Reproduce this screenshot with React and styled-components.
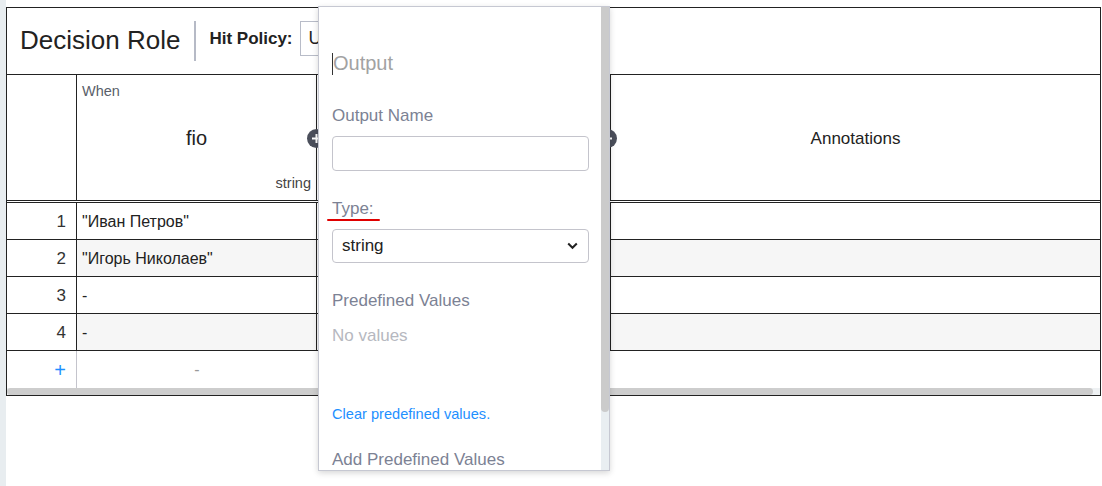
import React from "react";
import styled, { createGlobalStyle } from "styled-components";

const GlobalStyle = createGlobalStyle`
  html, body {
    margin: 0;
    padding: 0;
    background: #fff;
  }
  body {
    font-family: "Liberation Sans", Arial, sans-serif;
    color: #222;
  }
  * {
    box-sizing: border-box;
  }
`;

const COLS = "70px 240px 294px 1fr";

const Page = styled.div`
  display: flex;
  height: 100vh;
  overflow: hidden;
`;

const SideStrip = styled.div`
  width: 6px;
  flex-shrink: 0;
  background: #e8edf0;
`;

const Workspace = styled.div`
  position: relative;
  flex: 1;
  padding-top: 7px;
`;

const Table = styled.div`
  width: 1095px;
  border: 1px solid #222;
`;

const TitleBar = styled.div`
  display: flex;
  align-items: center;
  height: 67px;
  padding: 0 13px;
  border-bottom: 1px solid #222;
`;

const Title = styled.h1`
  margin: 0 0 1px 0;
  font-size: 26px;
  font-weight: normal;
  color: #222;
`;

const Separator = styled.div`
  width: 2px;
  height: 40px;
  margin: 0 13px 0 14px;
  background: #b6bac6;
`;

const HitLabel = styled.span`
  font-size: 17px;
  font-weight: bold;
  margin: 0 7px 5px 0;
`;

const PolicySelect = styled.div`
  display: flex;
  align-items: center;
  width: 210px;
  height: 35px;
  margin-bottom: 5px;
  padding: 0 8px;
  border: 1px solid #b8bcc8;
  font-size: 18px;
  color: #222;
`;

const HeadRow = styled.div`
  display: grid;
  grid-template-columns: ${COLS};
  height: 128px;
  border-bottom: 3px double #222;
`;

const HeadCell = styled.div`
  position: relative;
  display: flex;
  flex-direction: column;
  padding: 8px 5px 8px 5px;
  border-right: ${(p) => (p.last ? "none" : "1px solid #222")};
`;

const ClauseLabel = styled.div`
  font-size: 14.5px;
  line-height: 16px;
  color: #5a5f6a;
`;

const ClauseName = styled.div`
  flex: 1;
  display: flex;
  align-items: center;
  justify-content: center;
  padding-top: 2px;
  font-size: ${(p) => p.size || 20}px;
  color: #222;
`;

const TypeRef = styled.div`
  text-align: right;
  font-size: 14.5px;
  line-height: 17px;
  color: #444;
`;

const AddColumn = styled.div`
  position: absolute;
  top: 50%;
  right: ${(p) => p.offset}px;
  width: 19px;
  height: 19px;
  margin-top: -9px;
  border-radius: 50%;
  background: #4b4f5b;
  z-index: 2;
  display: flex;
  align-items: center;
  justify-content: center;
`;

const BodyRow = styled.div`
  display: grid;
  grid-template-columns: ${COLS};
  height: 37px;
  border-bottom: ${(p) => (p.open ? "none" : "1px solid #222")};
`;

const IndexCell = styled.div`
  display: flex;
  align-items: center;
  justify-content: flex-end;
  padding: 1px 10px 0 0;
  font-size: ${(p) => (p.add ? 20 : 17)}px;
  color: ${(p) => (p.add ? "#1e8fff" : "#333")};
  background: #fff;
  border-right: 1px solid ${(p) => (p.add ? "#c4c4cc" : "#222")};
`;

const DataCell = styled.div`
  display: flex;
  align-items: center;
  justify-content: ${(p) => (p.center ? "center" : "flex-start")};
  padding: 1px 0 0 ${(p) => (p.center ? 0 : 5)}px;
  font-size: 16px;
  color: ${(p) => (p.muted ? "#999" : "#222")};
  background: ${(p) => (p.stripe ? "#f6f6f6" : "#fff")};
  border-right: ${(p) => (p.last ? "none" : p.add ? "none" : "1px solid #222")};
`;

const HScroll = styled.div`
  height: 7px;
  background: #eef1f3;
`;

const HThumb = styled.div`
  width: calc(100% - 7px);
  height: 100%;
  border-radius: 4px;
  background: #cdcdcd;
`;

/* output clause editor popover */
const Popover = styled.div`
  position: absolute;
  top: 6px;
  left: 312px;
  width: 292px;
  height: 465px;
  display: flex;
  background: #fff;
  border: 1px solid #c6c8d2;
  box-shadow: 0 2px 6px rgba(0, 0, 0, 0.16);
  z-index: 5;
  overflow: hidden;
`;

const PopoverBody = styled.div`
  flex: 1;
  display: flex;
  flex-direction: column;
  padding: 42px 12px 0 13px;
  overflow: hidden;
`;

const VScroll = styled.div`
  width: 8px;
  flex-shrink: 0;
  background: #e9eef1;
`;

const VThumb = styled.div`
  height: 405px;
  border-radius: 0 0 4px 4px;
  background: #cbcbcb;
`;

const NameField = styled.div`
  position: relative;
  height: 30px;
  display: flex;
  align-items: center;
  &::before {
    content: "";
    position: absolute;
    left: 0;
    top: 4px;
    width: 1px;
    height: 22px;
    background: #333;
  }
`;

const NameInput = styled.input`
  width: 100%;
  border: none;
  outline: none;
  padding: 0 0 0 1px;
  font-family: inherit;
  font-size: 20px;
  color: #222;
  background: transparent;
  &::placeholder {
    color: #a2a2a2;
  }
`;

const Label = styled.div`
  position: relative;
  margin-top: ${(p) => p.gap}px;
  font-size: 17px;
  line-height: 20px;
  color: ${(p) => (p.faint ? "#b6b8c0" : "#7c8294")};
  white-space: nowrap;
`;

const Marked = styled.span`
  position: relative;
  &::after {
    content: "";
    position: absolute;
    left: -5px;
    right: -6px;
    bottom: -3px;
    height: 2px;
    border-radius: 1px;
    background: #e00000;
  }
`;

const TextBox = styled.input`
  width: 257px;
  height: 36px;
  margin-top: 10px;
  border: 1px solid #c4c4cc;
  border-radius: 4px;
  outline: none;
  font-family: inherit;
  font-size: 16px;
`;

const SelectBox = styled.div`
  width: 257px;
  height: 34px;
  margin-top: 10px;
  padding: 0 10px 0 9px;
  display: flex;
  align-items: center;
  justify-content: space-between;
  border: 1px solid #c4c4cc;
  border-radius: 4px;
  font-size: 17px;
  color: #222;
`;

const Link = styled.a`
  margin-top: ${(p) => p.gap}px;
  font-size: 14.6px;
  line-height: 18px;
  color: #1e90ff;
  text-decoration: none;
  cursor: pointer;
`;

const rows = [
  { n: 1, value: '"Иван Петров"' },
  { n: 2, value: '"Игорь Николаев"' },
  { n: 3, value: "-" },
  { n: 4, value: "-" },
];

function PlusMark() {
  return (
    <svg width="11" height="11" viewBox="0 0 11 11">
      <path d="M5.5 1v9M1 5.5h9" stroke="#fff" strokeWidth="2" />
    </svg>
  );
}

function Chevron() {
  return (
    <svg width="11" height="8" viewBox="0 0 11 8">
      <path d="M1.2 1.5 5.5 5.8 9.8 1.5" fill="none" stroke="#222" strokeWidth="2" />
    </svg>
  );
}

export default function App() {
  return (
    <>
      <GlobalStyle />
      <Page>
        <SideStrip />
        <Workspace>
          <Table>
            <TitleBar>
              <Title>Decision Role</Title>
              <Separator />
              <HitLabel>Hit Policy:</HitLabel>
              <PolicySelect>UNIQUE</PolicySelect>
            </TitleBar>

            <HeadRow>
              <HeadCell />
              <HeadCell>
                <ClauseLabel>When</ClauseLabel>
                <ClauseName>fio</ClauseName>
                <TypeRef>string</TypeRef>
                <AddColumn offset={-10}>
                  <PlusMark />
                </AddColumn>
              </HeadCell>
              <HeadCell>
                <ClauseLabel>Then</ClauseLabel>
                <ClauseName>Output</ClauseName>
                <TypeRef>string</TypeRef>
                <AddColumn offset={-7}>
                  <PlusMark />
                </AddColumn>
              </HeadCell>
              <HeadCell last>
                <ClauseLabel />
                <ClauseName size={17}>Annotations</ClauseName>
                <TypeRef />
              </HeadCell>
            </HeadRow>

            {rows.map((r) => {
              const stripe = r.n % 2 === 0;
              return (
                <BodyRow key={r.n}>
                  <IndexCell>{r.n}</IndexCell>
                  <DataCell stripe={stripe}>{r.value}</DataCell>
                  <DataCell stripe={stripe}>-</DataCell>
                  <DataCell stripe={stripe} last />
                </BodyRow>
              );
            })}
            <BodyRow open>
              <IndexCell add>+</IndexCell>
              <DataCell center muted add>
                -
              </DataCell>
              <DataCell center muted add>
                -
              </DataCell>
              <DataCell last />
            </BodyRow>
            <HScroll>
              <HThumb />
            </HScroll>
          </Table>

          <Popover>
            <PopoverBody>
              <NameField>
                <NameInput placeholder="Output" readOnly />
              </NameField>
              <Label gap={27}>Output Name</Label>
              <TextBox readOnly />
              <Label gap={28}>
                <Marked>Type:</Marked>
              </Label>
              <SelectBox>
                <span>string</span>
                <Chevron />
              </SelectBox>
              <Label gap={28}>Predefined Values</Label>
              <Label gap={15} faint>
                No values
              </Label>
              <Link gap={59}>Clear predefined values.</Link>
              <Label gap={27}>Add Predefined Values</Label>
            </PopoverBody>
            <VScroll>
              <VThumb />
            </VScroll>
          </Popover>
        </Workspace>
      </Page>
    </>
  );
}
